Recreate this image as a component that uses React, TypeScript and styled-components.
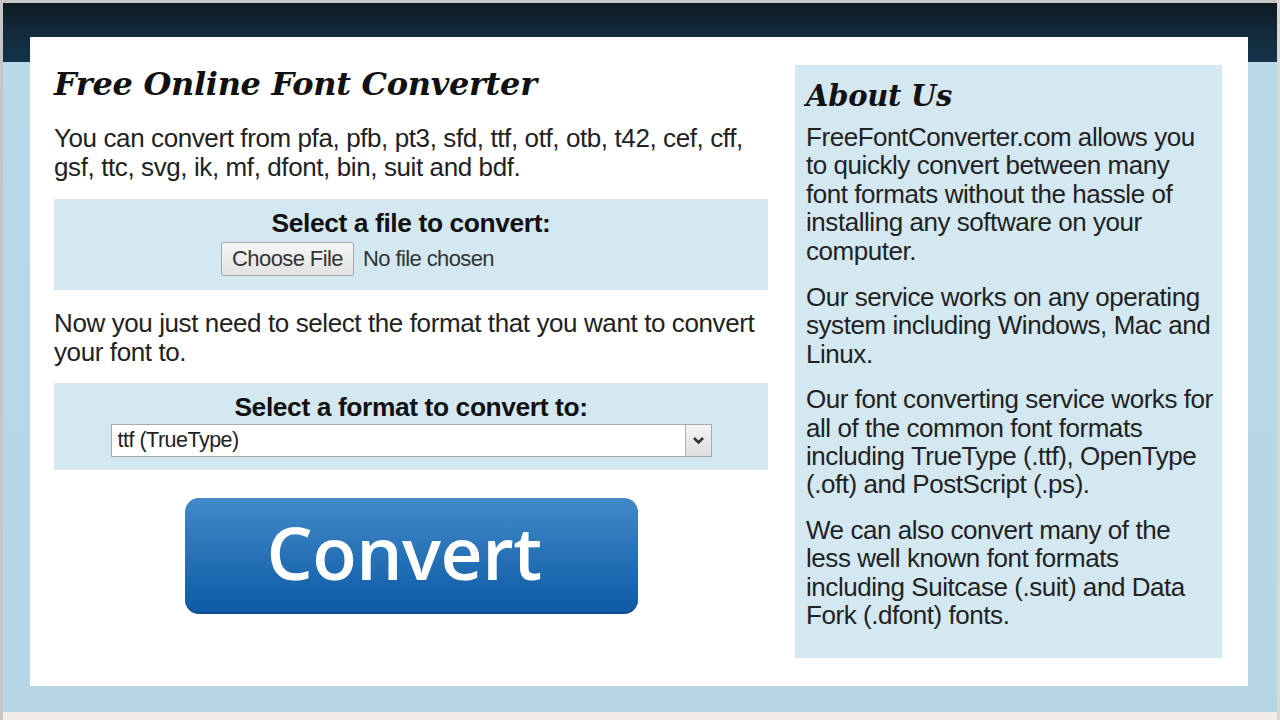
import React from "react"
import styled, { createGlobalStyle } from "styled-components"

const GlobalStyle = createGlobalStyle`
  html, body {
    margin: 0;
    padding: 0;
  }
  body {
    font-family: "Liberation Sans", Arial, sans-serif;
    color: #222;
  }
`

const Page = styled.div`
  box-sizing: border-box;
  height: 720px;
  padding: 37px 29px 26px 27px;
  border-left: 3px solid #c6c6c6;
  border-right: 3px solid #d8d8d8;
  background: linear-gradient(
    to bottom,
    #c6c6c6 0px,
    #c6c6c6 3px,
    #0e1a21 3px,
    #12293a 30px,
    #143349 62px,
    #b9d8e8 62px,
    #b6d5e6 712px,
    #f3ece8 712px
  );
`

const Card = styled.div`
  box-sizing: border-box;
  height: 649px;
  background: #fff;
  display: grid;
  grid-template-columns: 714px 427px;
  column-gap: 27px;
  padding: 28px 26px 28px 24px;
`

const Main = styled.div`
  display: flex;
  flex-direction: column;
`

const Title = styled.h1`
  margin: 0;
  font-family: "DejaVu Serif", Georgia, serif;
  font-style: italic;
  font-weight: bold;
  font-size: 32px;
  line-height: 38px;
  color: #111;
  letter-spacing: -0.3px;
`

const Text = styled.p<{ $gap?: number }>`
  margin: ${(p) => p.$gap ?? 0}px 0 0;
  font-size: 26px;
  line-height: 28.5px;
  letter-spacing: -0.4px;
  color: #222;
`

const Box = styled.div<{ $gap: number; $h: number }>`
  box-sizing: border-box;
  margin-top: ${(p) => p.$gap}px;
  height: ${(p) => p.$h}px;
  background: #d4e8f2;
  display: flex;
  flex-direction: column;
  align-items: center;
  padding-top: 10px;
`

const BoxLabel = styled.div`
  font-weight: bold;
  font-size: 26.4px;
  line-height: 28px;
  letter-spacing: -0.4px;
  color: #111;
`

const FileRow = styled.div`
  display: flex;
  align-items: center;
  gap: 9px;
  margin-top: 5px;
  margin-left: -107px;
`

const FileButton = styled.button`
  box-sizing: border-box;
  height: 34px;
  width: 133px;
  padding: 0;
  border: 1px solid #a8a8a8;
  border-radius: 2px;
  background: linear-gradient(#f6f6f6, #e2e2e2);
  font-family: "Liberation Sans", Arial, sans-serif;
  font-size: 22px;
  letter-spacing: -0.6px;
  color: #333;
`

const FileStatus = styled.span`
  font-size: 22px;
  letter-spacing: -0.6px;
  color: #333;
`

const Select = styled.div`
  box-sizing: border-box;
  width: 601px;
  height: 33px;
  margin-top: 3px;
  background: #fff;
  border: 1px solid #a9a9a9;
  display: flex;
  align-items: stretch;
`

const SelectValue = styled.div`
  flex: 1;
  padding-left: 6px;
  display: flex;
  align-items: center;
  font-size: 21.5px;
  letter-spacing: -0.5px;
  color: #222;
`

const SelectArrow = styled.div`
  width: 25px;
  border-left: 1px solid #b0b0b0;
  background: linear-gradient(#f4f4f4, #dedede);
  display: flex;
  align-items: center;
  justify-content: center;
`

const ConvertButton = styled.button`
  box-sizing: border-box;
  align-self: center;
  margin-top: 28px;
  width: 453px;
  height: 116px;
  border: none;
  border-bottom: 2px solid #0a4c8c;
  border-radius: 14px;
  background: linear-gradient(to bottom, #4189c8 0%, #2a74b8 45%, #0d5ba6 100%);
  color: #fff;
  font-family: "Open Sans", "Noto Sans", sans-serif;
  font-weight: 600;
  font-size: 73px;
  letter-spacing: -0.5px;
  line-height: 1;
  padding: 0 14px 8px 0;
`

const Aside = styled.div`
  background: #d4e8f2;
  padding: 12px 7px 0 11px;
`

const AsideTitle = styled.h2`
  margin: 0 0 7px;
  font-family: "DejaVu Serif", Georgia, serif;
  font-style: italic;
  font-weight: bold;
  font-size: 29px;
  line-height: 39px;
  color: #111;
  letter-spacing: -0.3px;
`

const AsideText = styled.p<{ $gap?: number }>`
  margin: ${(p) => p.$gap ?? 0}px 0 0;
  font-size: 26px;
  line-height: 28.4px;
  letter-spacing: -0.45px;
  color: #222;
`

export default function App() {
  return (
    <>
      <GlobalStyle />
      <Page>
        <Card>
          <Main>
            <Title>Free Online Font Converter</Title>
            <Text $gap={21}>
              You can convert from pfa, pfb, pt3, sfd, ttf, otf, otb, t42, cef, cff, gsf, ttc, svg,
              ik, mf, dfont, bin, suit and bdf.
            </Text>
            <Box $gap={18} $h={91}>
              <BoxLabel>Select a file to convert:</BoxLabel>
              <FileRow>
                <FileButton type="button">Choose File</FileButton>
                <FileStatus>No file chosen</FileStatus>
              </FileRow>
            </Box>
            <Text $gap={19}>
              Now you just need to select the format that you want to convert your font to.
            </Text>
            <Box $gap={17} $h={87}>
              <BoxLabel>Select a format to convert to:</BoxLabel>
              <Select>
                <SelectValue>ttf (TrueType)</SelectValue>
                <SelectArrow>
                  <svg width="13" height="9" viewBox="0 0 13 9">
                    <path d="M2 2 L6.5 6.5 L11 2" fill="none" stroke="#333" strokeWidth="2.6" />
                  </svg>
                </SelectArrow>
              </Select>
            </Box>
            <ConvertButton type="button">Convert</ConvertButton>
          </Main>
          <Aside>
            <AsideTitle>About Us</AsideTitle>
            <AsideText>
              FreeFontConverter.com allows you to quickly convert between many font formats
              without the hassle of installing any software on your computer.
            </AsideText>
            <AsideText $gap={18}>
              Our service works on any operating system including Windows, Mac and Linux.
            </AsideText>
            <AsideText $gap={17}>
              Our font converting service works for all of the common font formats including
              TrueType (.ttf), OpenType (.oft) and PostScript (.ps).
            </AsideText>
            <AsideText $gap={17}>
              We can also convert many of the less well known font formats including Suitcase
              (.suit) and Data Fork (.dfont) fonts.
            </AsideText>
          </Aside>
        </Card>
      </Page>
    </>
  )
}
